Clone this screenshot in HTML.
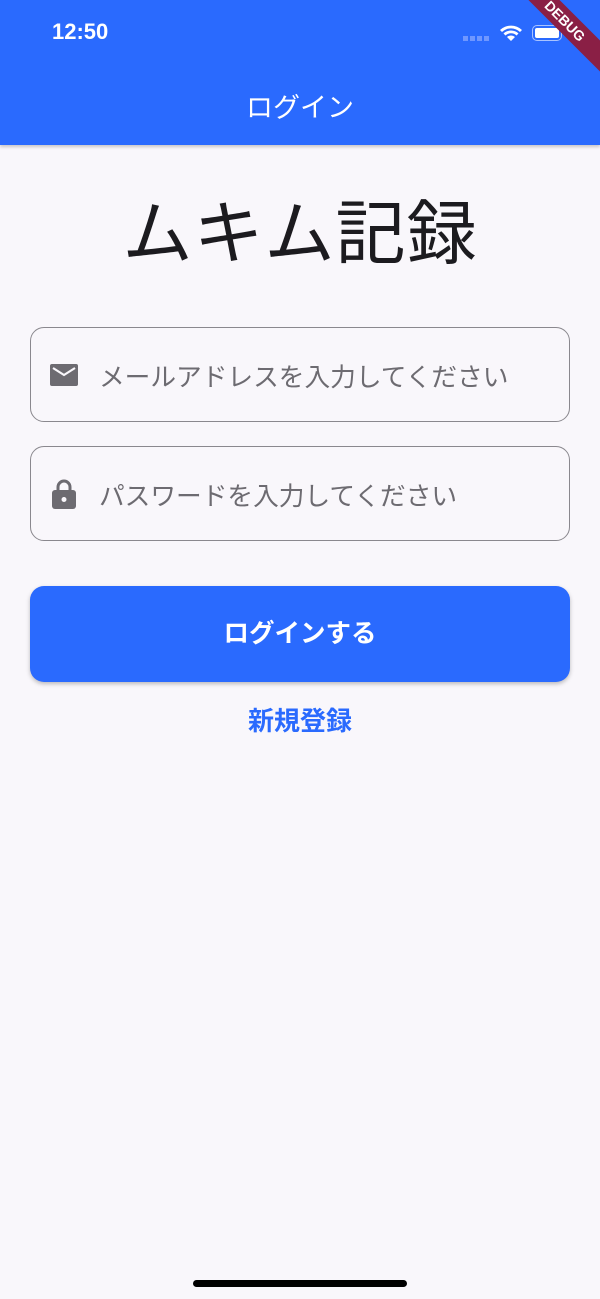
<!DOCTYPE html>
<html><head><meta charset="utf-8"><style>
*{margin:0;padding:0;box-sizing:border-box}
body{width:600px;height:1299px;background:#f9f7fb;font-family:"Liberation Sans","Noto Sans CJK JP",sans-serif;position:relative;overflow:hidden}
.hdr{position:absolute;left:0;top:0;width:600px;height:145px;background:#2a6afe;box-shadow:0 2px 3px rgba(0,0,0,.2)}
.time{position:absolute;left:52px;top:19px;color:#fff;font-size:22px;font-weight:600}
.ttl{position:absolute;left:0;width:600px;top:86px;text-align:center;color:#fff;font-size:27px}
.big{position:absolute;left:0;width:600px;top:178px;text-align:center;font-size:70px;color:#1c1b1f;letter-spacing:1px}
.field{position:absolute;left:30px;width:540px;height:95px;border:1.5px solid #8a888e;border-radius:14px}
.ph{position:absolute;left:68px;top:29px;font-size:25.7px;color:#6d6b71}
.btn{position:absolute;left:30px;top:586px;width:540px;height:96px;background:#2a6afe;border-radius:14px;box-shadow:0 2px 4px rgba(0,0,0,.25);color:#fff;font-size:25.5px;font-weight:bold;text-align:center;line-height:96px}
.reg{position:absolute;left:0;width:600px;top:701px;text-align:center;color:#2a6afe;font-size:26px;font-weight:bold}
.home{position:absolute;left:193px;top:1280px;width:214px;height:7px;background:#000;border-radius:4px}
.debug{position:absolute;right:-40px;top:10px;width:150px;height:22px;background:#8a1f45;transform:rotate(45deg);color:#fff;font-size:14px;font-weight:bold;text-align:center;line-height:22px}
</style></head><body>
<div class="hdr">
<div class="time">12:50</div>
<div style="position:absolute;left:463px;top:36px;width:26px;height:5px;background:repeating-linear-gradient(90deg,#6f97ff 0 5px,transparent 5px 7px)"></div>
<svg style="position:absolute;left:499px;top:24px" width="24" height="18" viewBox="0 0 24 18"><path d="M12 17 L8 13 A6 6 0 0 1 16 13Z M4.5 9.5 A11 11 0 0 1 19.5 9.5 L17.5 11.5 A8 8 0 0 0 6.5 11.5Z M1 6 A16 16 0 0 1 23 6 L21 8 A13 13 0 0 0 3 8Z" fill="#fff"/></svg>
<div style="position:absolute;left:532px;top:25px;width:30px;height:16px;border:1.5px solid #a9c3ff;border-radius:5px;padding:2px"><div style="width:100%;height:100%;background:#fff;border-radius:2px"></div></div>
<div class="ttl">ログイン</div>
</div>
<div class="debug">DEBUG</div>
<div class="big">ムキム記録</div>
<div class="field" style="top:327px">
<svg style="position:absolute;left:19px;top:36px" width="28" height="22" viewBox="0 0 28 22"><rect width="28" height="22" rx="2" fill="#6d6b71"/><path d="M3 4 L14 11 L25 4" stroke="#f9f7fb" stroke-width="2.2" fill="none"/></svg>
<div class="ph">メールアドレスを入力してください</div></div>
<div class="field" style="top:446px">
<svg style="position:absolute;left:21px;top:32px" width="24" height="30" viewBox="0 0 24 30"><path d="M6 12 V8 A6 6 0 0 1 18 8 V12" stroke="#6d6b71" stroke-width="3" fill="none"/><rect y="11" width="24" height="19" rx="3" fill="#6d6b71"/><circle cx="12" cy="20.5" r="2.5" fill="#f9f7fb"/></svg>
<div class="ph">パスワードを入力してください</div></div>
<div class="btn">ログインする</div>
<div class="reg">新規登録</div>
<div class="home"></div>
</body></html>
